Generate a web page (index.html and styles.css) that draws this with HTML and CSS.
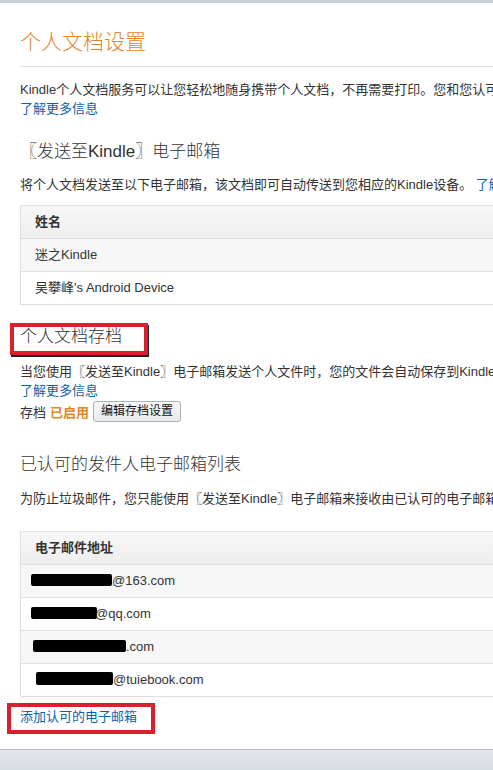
FILE: index.html
```html
<!DOCTYPE html>
<html lang="zh-CN">
<head>
<meta charset="utf-8">
<title>个人文档设置</title>
<link rel="stylesheet" href="styles.css">
</head>
<body>
<div class="topbar"></div>
<main class="page">
  <h1 class="title">个人文档设置</h1>
  <p class="text p1">Kindle个人文档服务可以让您轻松地随身携带个人文档，不再需要打印。您和您认可的联系人可以将文档发送到您的Kindle设备和支持的Kindle阅读应用程序。<br><a class="link" href="#">了解更多信息</a></p>

  <h2 class="heading h-send">〖发送至Kindle〗电子邮箱</h2>
  <p class="text p2">将个人文档发送至以下电子邮箱，该文档即可自动传送到您相应的Kindle设备。 <a class="link" href="#">了解更多信息</a></p>
  <div class="table t1">
    <div class="row head">姓名</div>
    <div class="row alt">迷之Kindle</div>
    <div class="row">吴攀峰's Android Device</div>
  </div>

  <h2 class="heading h-archive"><span class="mark mark1">个人文档存档</span></h2>
  <p class="text p3">当您使用〖发送至Kindle〗电子邮箱发送个人文件时，您的文件会自动保存到Kindle资料库中，方便您随时随地下载阅读。<br><a class="link" href="#">了解更多信息</a></p>
  <div class="status">存档 <b class="on">已启用</b> <button class="btn" type="button">编辑存档设置</button></div>

  <h2 class="heading h-list">已认可的发件人电子邮箱列表</h2>
  <p class="text p4">为防止垃圾邮件，您只能使用〖发送至Kindle〗电子邮箱来接收由已认可的电子邮箱发送的文档。</p>
  <div class="table t2">
    <div class="row head">电子邮件地址</div>
    <div class="row alt email"><span class="blob b1"></span>@163.com</div>
    <div class="row email"><span class="blob b2"></span>@qq.com</div>
    <div class="row alt email"><span class="blob b3"></span>.com</div>
    <div class="row email"><span class="blob b4"></span>@tuiebook.com</div>
  </div>
  <div class="add"><a class="link mark mark2" href="#">添加认可的电子邮箱</a></div>
</main>
<footer class="footer"></footer>
</body>
</html>
```

FILE: styles.css
```css
html, body {
  margin: 0;
  padding: 0;
}
body {
  width: 493px;
  height: 770px;
  overflow: hidden;
  background: #fff;
  font-family: "Liberation Sans", "Noto Sans CJK SC", Arial, sans-serif;
  color: #333;
  display: flex;
  flex-direction: column;
}
.topbar {
  height: 3px;
  background: #c9cdd5;
  flex: none;
}
.page {
  flex: 1;
  width: 760px;
  padding-left: 20px;
  box-sizing: content-box;
}
.title {
  margin: 26px 0 0;
  font-size: 21px;
  line-height: 26px;
  font-weight: 300;
  color: #e0872d;
  padding-bottom: 11px;
  border-bottom: 1px solid #e4e4e4;
}
.text {
  margin: 0;
  font-size: 13px;
  line-height: 19px;
  white-space: nowrap;
  color: #333;
}
.link {
  color: #0a63b0;
  text-decoration: none;
}
.p1 { margin-top: 13px; }
.heading {
  margin: 0;
  font-size: 17px;
  line-height: 22px;
  font-weight: 300;
  color: #333;
}
.h-send { margin-top: 23px; }
.p2 { margin-top: 12px; }
.table {
  border: 1px solid #ddd;
  border-top-color: #e3e3e3;
}
.t1 { margin-top: 11px; }
.row {
  height: 32px;
  line-height: 32px;
  font-size: 13px;
  padding-left: 14px;
  border-top: 1px solid #e0e0e0;
  white-space: nowrap;
}
.row:first-child { border-top: 0; }
.row.head {
  font-weight: bold;
  background: linear-gradient(#f7f7f7, #eeeeee);
  height: 32px;
  border-bottom: 1px solid #dcdcdc;
}
.row.head + .row { border-top: 0; }
.row.alt { background: #f7f7f7; }
.h-archive {
  margin-top: 21px;
}
.mark {
  position: relative;
  display: inline-block;
}
.mark::after {
  content: "";
  position: absolute;
  border: 4px solid #d7222b;
  box-shadow: 1px 2px 0 #222;
  pointer-events: none;
}
.mark1::after {
  left: -10px;
  right: -26px;
  top: -3px;
  bottom: -7px;
}
.mark2::after {
  left: -13px;
  right: -18px;
  top: -4px;
  bottom: -8px;
  box-shadow: none;
}
.p3 { margin-top: 14px; }
.status {
  display: flex;
  align-items: center;
  height: 21px;
  font-size: 13px;
  margin-top: 1px;
  white-space: nowrap;
}
.on {
  color: #e0872d;
  margin-left: 4px;
  margin-right: 4px;
}
.btn {
  height: 21px;
  padding: 0 7px;
  font-family: inherit;
  font-size: 12px;
  line-height: 19px;
  color: #111;
  border: 1px solid #adb1b8;
  border-radius: 3px;
  background: linear-gradient(#f7f8fa, #e7e9ec);
}
.h-list { margin-top: 32px; }
.p4 { margin-top: 13px; }
.t2 { margin-top: 23px; }
.row.email { padding-left: 10px; }
.blob {
  display: inline-block;
  height: 12px;
  background: #000;
  vertical-align: -1px;
  border-radius: 2px;
}
.b1 { width: 81px; }
.b2 { width: 66px; margin-right: -2px; }
.b3 { width: 93px; margin-left: 2px; }
.b4 { width: 77px; margin-left: 5px; height: 13px; }
.add {
  margin-top: 10px;
  font-size: 13px;
  line-height: 19px;
}
.footer {
  flex: none;
  height: 20px;
  border-top: 1px solid #b4b7bd;
  background: linear-gradient(#e2e5ea, #d9dde4);
}
```
